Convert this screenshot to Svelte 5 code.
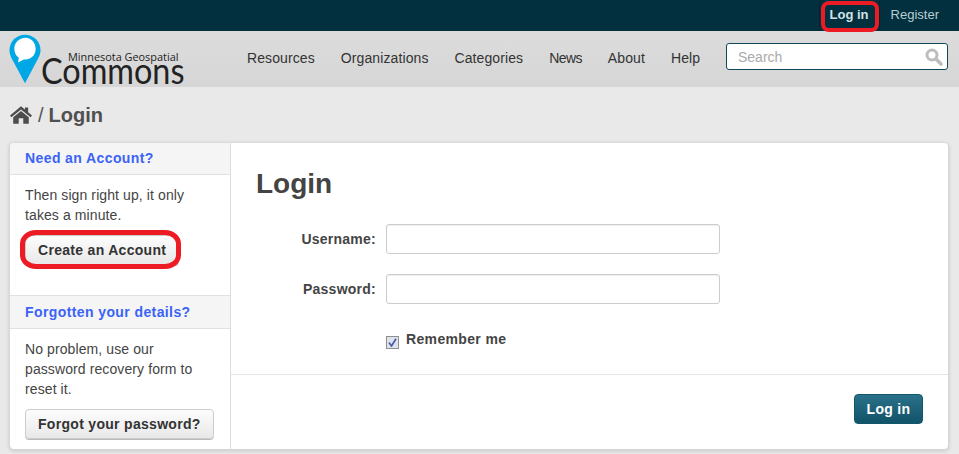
<script>
  const nav = ["Resources", "Organizations", "Categories", "News", "About", "Help"];
</script>

<div class="page">
  <div class="topbar">
    <a href="#" class="top-link login-link">Log in<span class="scribble top-scribble"></span></a>
    <a href="#" class="top-link">Register</a>
  </div>

  <header class="masthead">
    <a href="#" class="logo">
      <svg class="pin" width="32" height="50" viewBox="0 0 33 51">
        <path d="M16.5 0.5C7.400 0.5 0.5 7.600 0.5 16.500C0.5 19 1.200 21.600 2.400 24.200L16.500 50.500L30.400 24.200C31.700 21.600 32.500 19 32.500 16.500C32.500 7.600 25.600 0.5 16.500 0.5Z" fill="#00a7e5"/>
        <path d="M17 3.500C10.300 3.500 5.500 8.700 5.500 15C5.500 19 7.100 22.300 10.100 24.200L9.300 29L15.300 25.900C15.900 26 16.500 26 17 26C23.400 26 27.500 21 27.500 15C27.500 8.800 23.100 3.500 17 3.500Z" fill="#fff"/>
      </svg>
      <span class="logo-text">
        <span class="logo-small">Minnesota Geospatial</span>
        <span class="logo-big">Commons</span>
      </span>
    </a>
    <nav class="nav">
      {#each nav as item}
        <a href="#">{item}</a>
      {/each}
    </nav>
    <div class="search">
      <input type="text" placeholder="Search" />
      <svg width="18" height="18" viewBox="0 0 18 18">
        <circle cx="7" cy="7" r="5" fill="none" stroke="#bdbdbd" stroke-width="3"/>
        <path d="M11 11L16 16" stroke="#bdbdbd" stroke-width="3.600" stroke-linecap="round"/>
      </svg>
    </div>
  </header>

  <div class="crumbs">
    <svg width="22" height="18" viewBox="0 0 24 19">
      <path d="M12 0L0 10L1.500 12L12 3.400L22.500 12L24 10L19.800 6.500V1.200H16.300V3.600Z" fill="#4d4d4d"/>
      <path d="M12 5L3.500 12V19H9.500V13H14.500V19H20.500V12Z" fill="#4d4d4d"/>
    </svg>
    <span class="sep">/</span>
    <strong>Login</strong>
  </div>

  <div class="card">
    <aside class="side">
      <section class="block first">
        <h2>Need an Account?</h2>
        <div class="block-body">
          <p>Then sign right up, it only takes a minute.</p>
          <button class="btn">Create an Account<span class="scribble btn-scribble"></span></button>
        </div>
      </section>
      <section class="block">
        <h2>Forgotten your details?</h2>
        <div class="block-body">
          <p>No problem, use our password recovery form to reset it.</p>
          <button class="btn">Forgot your password?</button>
        </div>
      </section>
    </aside>

    <main class="main">
      <form class="login-form" on:submit|preventDefault>
        <h1>Login</h1>
        <div class="field">
          <label for="username">Username:</label>
          <input id="username" type="text" />
        </div>
        <div class="field">
          <label for="password">Password:</label>
          <input id="password" type="password" />
        </div>
        <div class="remember">
          <span class="check">
            <svg width="9" height="9" viewBox="0 0 9 9">
              <path d="M1 4.500L3.500 8L8 0.800" fill="none" stroke="#4a5fa8" stroke-width="1.700"/>
            </svg>
          </span>
          <span>Remember me</span>
        </div>
      </form>
      <div class="actions">
        <button class="primary">Log in</button>
      </div>
    </main>
  </div>
</div>

<style>
  :global(body) {
    margin: 0;
    background: #e9e9e9;
    font-family: "Liberation Sans", Arial, sans-serif;
    color: #444;
  }

  a {
    text-decoration: none;
  }

  .page {
    width: 959px;
    height: 454px;
    overflow: hidden;
  }

  .topbar {
    height: 31px;
    background: #02303f;
    display: flex;
    justify-content: flex-end;
    box-sizing: border-box;
    padding-right: 9px;
  }

  .top-link {
    position: relative;
    font-size: 13px;
    line-height: 30px;
    padding: 0 11px;
    color: #b9ccd2;
  }

  .login-link {
    font-weight: bold;
    color: #d3e2e6;
    border-left: 1px solid #022533;
    border-right: 1px solid #022533;
    padding: 0 10px;
  }

  .scribble {
    position: absolute;
    border: 4px solid #ed1c24;
    pointer-events: none;
  }

  .top-scribble {
    left: 1px;
    right: 0;
    top: 1px;
    bottom: -1px;
    border-radius: 8px;
  }

  .btn-scribble {
    left: -6px;
    right: -3px;
    top: -6px;
    bottom: -5px;
    border-width: 5px;
    border-radius: 16px / 14px;
  }

  .masthead {
    height: 56px;
    background: linear-gradient(#dcdcdc, #d6d6d6);
    display: flex;
    align-items: flex-start;
    padding-left: 9px;
  }

  .logo {
    display: flex;
    width: 225px;
    padding-top: 3px;
    color: #222;
    flex: none;
  }

  .pin {
    flex: none;
  }

  .logo-text {
    display: flex;
    flex-direction: column;
    font-family: "Open Sans", sans-serif;
  }

  .logo-small {
    font-size: 10.900px;
    line-height: 12px;
    margin: 17px 0 0 27px;
    white-space: nowrap;
    color: #222;
  }

  .logo-big {
    font-family: Lato, sans-serif;
    font-size: 36px;
    line-height: 26px;
    margin-top: -6px;
    color: #222;
    white-space: nowrap;
    transform: scaleX(0.9);
    transform-origin: left;
  }

  .nav {
    display: flex;
    gap: 26px;
    width: 479px;
    margin-top: 19px;
    margin-left: 13px;
    flex: none;
  }

  .nav a {
    color: #333;
    font-size: 14px;
    line-height: 16px;
    letter-spacing: 0.1px;
  }

  /* hinted a bit narrower in the original */
  .nav a:nth-child(4) {
    letter-spacing: -0.6px;
  }

  .search {
    width: 222px;
    height: 27px;
    box-sizing: border-box;
    margin-top: 12px;
    background: #fff;
    border: 1px solid #12485c;
    border-radius: 3px;
    display: flex;
    align-items: center;
    padding: 0 4px 0 11px;
    flex: none;
  }

  .search input {
    flex: 1;
    min-width: 0;
    border: 0;
    outline: 0;
    padding: 0;
    font: 14px "Liberation Sans", Arial, sans-serif;
    background: transparent;
  }

  .search input::placeholder {
    color: #aaa;
    opacity: 1;
  }

  .crumbs {
    height: 56px;
    display: flex;
    align-items: center;
    padding-left: 10px;
    gap: 5px;
    font-size: 20px;
    color: #555;
  }

  .crumbs strong {
    color: #505050;
  }

  .sep {
    margin-left: 1px;
  }

  .card {
    margin: 0 11px 0 10px;
    height: 306px;
    background: #fff;
    border-radius: 4px;
    box-shadow: 0 1px 3px 2px #d4d4d4;
    display: flex;
    overflow: hidden;
  }

  .side {
    width: 221px;
    box-sizing: border-box;
    border-right: 1px solid #ddd;
    flex: none;
  }

  .block h2 {
    margin: 0;
    padding: 0 15px;
    height: 31px;
    line-height: 31px;
    font-size: 14px;
    color: #3b63f5;
    background: #f5f5f5;
    border-bottom: 1px solid #e1e1e1;
    letter-spacing: 0.4px;
  }

  .block + .block h2 {
    border-top: 1px solid #e1e1e1;
    height: 32px;
    line-height: 32px;
  }

  .block-body {
    padding: 10px 15px;
  }

  .first {
    height: 152px;
  }

  .block p {
    margin: 0 0 10px;
    font-size: 14px;
    line-height: 20px;
    color: #444;
    letter-spacing: 0.1px;
  }

  .btn {
    position: relative;
    display: block;
    height: 30px;
    padding: 0 12px;
    border: 1px solid #ccc;
    border-radius: 4px;
    background: linear-gradient(#fdfdfd, #e8e8e8);
    color: #333;
    font: bold 14px/28px "Liberation Sans", Arial, sans-serif;
    letter-spacing: 0.3px;
    box-shadow: 0 1px 0 #bbb;
    white-space: nowrap;
  }

  .main {
    flex: 1;
    display: flex;
    flex-direction: column;
  }

  .login-form {
    height: 232px;
    box-sizing: border-box;
    padding: 24px 25px 0;
    border-bottom: 1px solid #e5e5e5;
  }

  h1 {
    margin: 0 0 23px;
    font-size: 28px;
    line-height: 34px;
    color: #444;
  }

  .field {
    display: flex;
    align-items: center;
    margin-bottom: 20px;
  }

  .field label {
    width: 120px;
    text-align: right;
    font-size: 14px;
    font-weight: bold;
    color: #444;
    letter-spacing: 0.25px;
    flex: none;
  }

  .field input {
    width: 334px;
    height: 30px;
    box-sizing: border-box;
    margin-left: 10px;
    border: 1px solid #ccc;
    border-radius: 3px;
    background: #fff;
    box-shadow: inset 0 1px 1px #eee;
  }

  .remember {
    display: flex;
    align-items: flex-start;
    gap: 7px;
    margin-left: 130px;
    margin-top: 27px;
    font-size: 14px;
    line-height: 16px;
    font-weight: bold;
    letter-spacing: 0.35px;
    color: #444;
  }

  .check {
    width: 13px;
    height: 13px;
    box-sizing: border-box;
    margin-top: 5px;
    border: 1px solid #8e8f8f;
    background: #dfe3ee;
    display: flex;
    align-items: center;
    justify-content: center;
  }

  .actions {
    display: flex;
    justify-content: flex-end;
    padding: 19px 25px 0 0;
  }

  .primary {
    height: 30px;
    width: 69px;
    padding: 0;
    border: 1px solid #12576c;
    border-radius: 4px;
    background: linear-gradient(#2a7189, #125369);
    color: #fff;
    font: bold 14px/28px "Liberation Sans", Arial, sans-serif;
    letter-spacing: 0.3px;
  }
</style>
